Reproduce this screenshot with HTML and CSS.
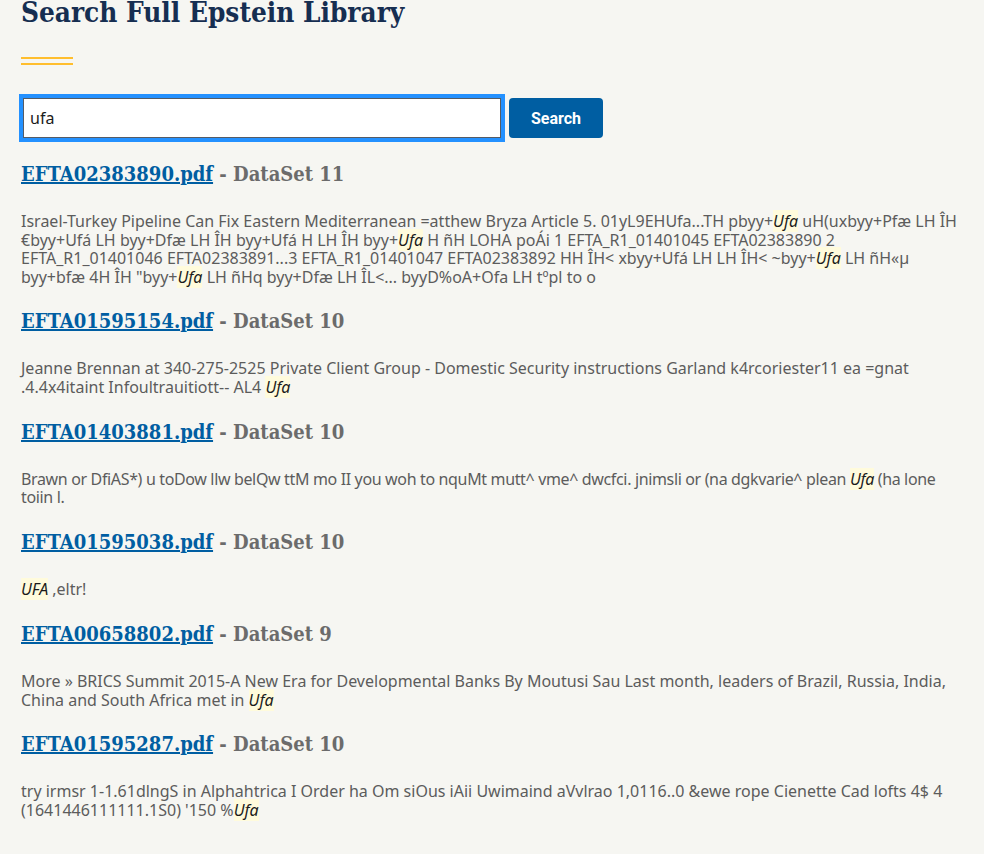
FILE: index.html
```html
<!DOCTYPE html>
<html lang="en">
<head>
<meta charset="utf-8">
<title>Search Full Epstein Library</title>
<link rel="stylesheet" href="styles.css">
</head>
<body>
<main class="page">
  <h1 class="title">Search Full Epstein Library</h1>
  <div class="rule"><span></span><span></span></div>
  <form class="search">
    <input class="search-input" type="text" value="ufa">
    <button class="search-btn" type="button">Search</button>
  </form>
  <ul class="results">
    <li class="result">
      <h2 class="result-title"><a href="#">EFTA02383890.pdf</a> <span class="ds">- DataSet 11</span></h2>
      <p class="snippet">Israel-Turkey Pipeline Can Fix Eastern Mediterranean =atthew Bryza Article 5. 01yL9EHUfa...TH pbyy+<mark>Ufa</mark> uH(uxbyy+Pfæ LH ÎH €byy+Ufá LH byy+Dfæ LH ÎH byy+Ufá H LH ÎH byy+<mark>Ufa</mark> H ñH LOHA poÁi 1 EFTA_R1_01401045 EFTA02383890 2 EFTA_R1_01401046 EFTA02383891...3 EFTA_R1_01401047 EFTA02383892 HH ÎH&lt; xbyy+Ufá LH LH ÎH&lt; ~byy+<mark>Ufa</mark> LH ñH«µ byy+bfæ 4H ÎH "byy+<mark>Ufa</mark> LH ñHq byy+Dfæ LH ÎL&lt;... byyD%oA+Ofa LH tºpl to o</p>
    </li>
    <li class="result">
      <h2 class="result-title"><a href="#">EFTA01595154.pdf</a> <span class="ds">- DataSet 10</span></h2>
      <p class="snippet">Jeanne Brennan at 340-275-2525 Private Client Group - Domestic Security instructions Garland k4rcoriester11 ea =gnat .4.4x4itaint Infoultrauitiott-- AL4 <mark>Ufa</mark></p>
    </li>
    <li class="result">
      <h2 class="result-title"><a href="#">EFTA01403881.pdf</a> <span class="ds">- DataSet 10</span></h2>
      <p class="snippet snippet-tight">Brawn or DfiAS*) u toDow llw belQw ttM mo II you woh to nquMt mutt^ vme^ dwcfci. jnimsli or (na dgkvarie^ plean <mark>Ufa</mark> (ha lone toiin l.</p>
    </li>
    <li class="result">
      <h2 class="result-title"><a href="#">EFTA01595038.pdf</a> <span class="ds">- DataSet 10</span></h2>
      <p class="snippet"><mark>UFA</mark> ,eltr!</p>
    </li>
    <li class="result">
      <h2 class="result-title"><a href="#">EFTA00658802.pdf</a> <span class="ds">- DataSet 9</span></h2>
      <p class="snippet">More » BRICS Summit 2015-A New Era for Developmental Banks By Moutusi Sau Last month, leaders of Brazil, Russia, India, China and South Africa met in <mark>Ufa</mark></p>
    </li>
    <li class="result">
      <h2 class="result-title"><a href="#">EFTA01595287.pdf</a> <span class="ds">- DataSet 10</span></h2>
      <p class="snippet">try irmsr 1-1.61dlngS in Alphahtrica I Order ha Om siOus iAii Uwimaind aVvlrao 1,0116..0 &amp;ewe rope Cienette Cad lofts 4$ 4 (1641446111111.1S0) '150 %<mark>Ufa</mark></p>
    </li>
  </ul>
</main>
</body>
</html>
```
FILE: styles.css
```css
html, body {
  margin: 0;
  padding: 0;
  background: #f6f6f2;
}
body {
  font-family: "Noto Sans", "Liberation Sans", sans-serif;
  color: #5c5c5c;
}
.page {
  padding: 0 21px;
  margin-top: -7px;
}
.title {
  font-family: "DejaVu Serif", "Liberation Serif", serif;
  font-stretch: condensed;
  font-weight: bold;
  font-size: 27.7px;
  line-height: 40px;
  color: #162e51;
  margin: 0;
}
.rule {
  margin-top: 24px;
  width: 52px;
  display: flex;
  flex-direction: column;
  gap: 4px;
}
.rule span {
  display: block;
  height: 2px;
  background: #ffbe2e;
}
.search {
  display: flex;
  align-items: center;
  gap: 8px;
  margin-top: 33px;
}
.search-input {
  box-sizing: border-box;
  width: 478px;
  height: 40px;
  margin: 0 0 0 2px;
  padding: 0 6px;
  border: 1px solid #565c65;
  outline: 4px solid #2491ff;
  outline-offset: 0;
  background: #fff;
  font-family: "Noto Sans", sans-serif;
  font-size: 16px;
  color: #1b1b1b;
}
.search-btn {
  height: 40px;
  padding: 0 22px;
  border: none;
  border-radius: 4px;
  background: #005ea2;
  color: #fff;
  font-family: Roboto, "Liberation Sans", sans-serif;
  font-weight: bold;
  font-size: 16px;
}
.results {
  list-style: none;
  margin: 22px 0 0;
  padding: 0;
}
.result-title {
  font-family: "DejaVu Serif", "Liberation Serif", serif;
  font-stretch: condensed;
  font-weight: bold;
  font-size: 20px;
  line-height: 28px;
  margin: 0;
}
.result-title a {
  color: #005ea2;
}
.ds {
  color: #6b6b6b;
}
.snippet {
  font-size: 16px;
  line-height: 18.5px;
  margin: 24px 0 21.4px;
}
.snippet-tight {
  letter-spacing: -0.35px;
}
mark {
  background: #fffbdc;
  color: #1b1b1b;
  font-style: italic;
}
```
